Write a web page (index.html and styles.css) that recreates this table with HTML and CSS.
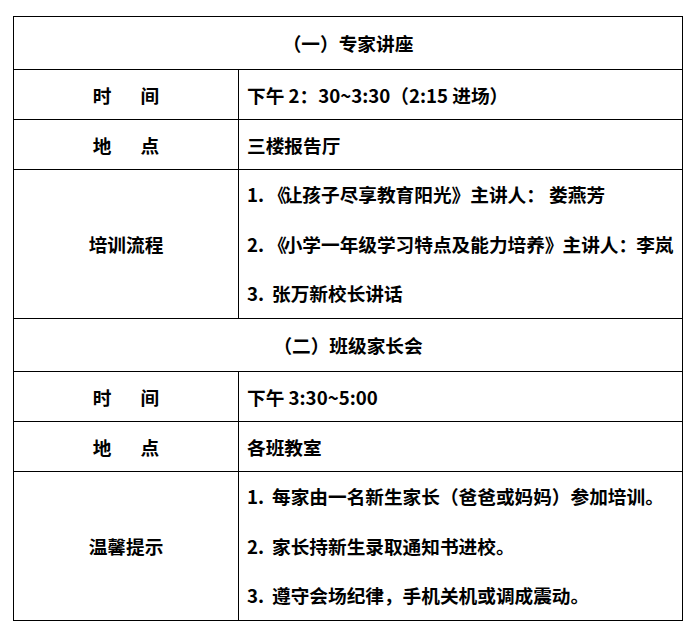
FILE: index.html
```html
<!DOCTYPE html>
<html lang="zh-CN">
<head>
<meta charset="utf-8">
<title>培训安排</title>
<link rel="stylesheet" href="styles.css">
</head>
<body>
<div class="sheet">
  <div class="cell head">（一）专家讲座</div>

  <div class="cell label">时<span class="gap"></span>间</div>
  <div class="cell value">下午 2：30~3:30（2:15 进场）</div>

  <div class="cell label">地<span class="gap"></span>点</div>
  <div class="cell value">三楼报告厅</div>

  <div class="cell label tall">培训流程</div>
  <div class="cell value tall list">
    <div class="line"><span class="num">1.</span><span class="pl">《</span>让孩子尽享教育阳光》主讲人： 娄燕芳</div>
    <div class="line"><span class="num">2.</span><span class="pl">《</span>小学一年级学习特点及能力培养<span class="pr">》</span>主讲人<span class="pr">：</span>李岚</div>
    <div class="line"><span class="num">3.</span>张万新校长讲话</div>
  </div>

  <div class="cell head">（二）班级家长会</div>

  <div class="cell label">时<span class="gap"></span>间</div>
  <div class="cell value">下午 3:30~5:00</div>

  <div class="cell label">地<span class="gap"></span>点</div>
  <div class="cell value">各班教室</div>

  <div class="cell label tall">温馨提示</div>
  <div class="cell value tall list">
    <div class="line"><span class="num">1.</span>每家由一名新生家长（爸爸或妈妈）参加培训。</div>
    <div class="line"><span class="num">2.</span>家长持新生录取通知书进校。</div>
    <div class="line"><span class="num">3.</span>遵守会场纪律，手机关机或调成震动。</div>
  </div>
</div>
</body>
</html>
```
FILE: styles.css
```css
html, body {
  margin: 0;
  padding: 0;
  background: #ffffff;
}

body {
  font-family: "Noto Sans CJK SC", "Noto Sans", sans-serif;
  font-weight: 700;
  font-size: 18.67px;
  color: #000000;
}

.sheet {
  margin: 16px 0 0 13px;
  width: 670px;
  box-sizing: border-box;
  border-left: 1px solid #000;
  border-top: 1px solid #000;
  display: grid;
  grid-template-columns: 225px 444px;
  grid-auto-rows: auto;
}

.cell {
  box-sizing: border-box;
  border-right: 1px solid #000;
  border-bottom: 1px solid #000;
  height: 50px;
  display: flex;
  align-items: center;
  white-space: nowrap;
  padding-bottom: 1px;
}

.head {
  grid-column: 1 / 3;
  height: 53px;
  justify-content: center;
  padding-bottom: 2px;
}

.label {
  justify-content: center;
}

.value {
  padding-left: 8px;
}

.tall {
  height: 149px;
}

.list {
  flex-direction: column;
  align-items: stretch;
  justify-content: center;
  padding-bottom: 1px;
}

.line {
  height: 49.6px;
  line-height: 49.6px;
}

.num {
  display: inline-block;
  width: 25px;
}

.pl {
  margin-left: -4px;
  letter-spacing: -3px;
}

.pr {
  letter-spacing: -1px;
}

.gap {
  display: inline-block;
  width: 29px;
}
```
